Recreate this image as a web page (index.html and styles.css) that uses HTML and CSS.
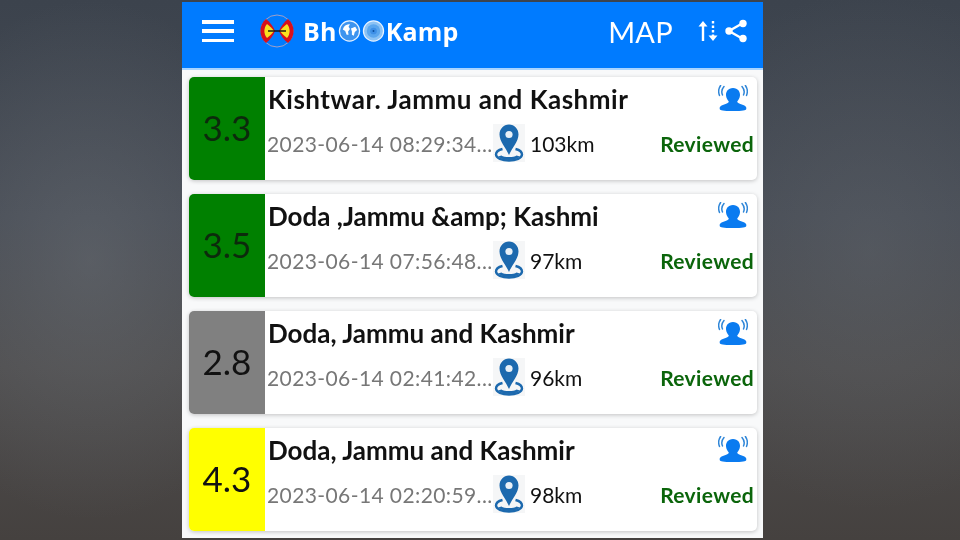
FILE: index.html
```html
<!DOCTYPE html>
<html lang="en">
<head>
<meta charset="utf-8">
<title>BhooKamp</title>
<link rel="stylesheet" href="styles.css">
</head>
<body>
<svg class="defs" width="0" height="0" aria-hidden="true">
  <symbol id="pin" viewBox="0 0 32 38">
    <path d="M16 0.500C10.500 0.500 6.500 5 6.500 10.500 6.500 17.500 13 24 16 31 19 24 25.500 17.500 25.500 10.500 25.500 5 21.500 0.500 16 0.500Z" fill="#1c69ae"/>
    <circle cx="16" cy="10.500" r="3.600" fill="#e8f0f7"/>
    <path d="M9.500 25C5.500 26 3 28 3 30.500 3 34 9 36.500 16 36.500S29 34 29 30.500C29 28 26.500 26 22.500 25" fill="none" stroke="#1c69ae" stroke-width="2.400"/>
    <path d="M5 32.500C8 35 12 36 16 36S24 35 27 32.500L23.500 31.500C21 33.500 11 33.500 8.500 31.500Z" fill="#1c69ae"/>
  </symbol>
  <symbol id="felt" viewBox="0 0 30 26">
    <path d="M15 3C10 3 7.800 6.800 8 10.300 8.200 13 9.500 15 10.800 16.500 10.800 18 8.500 18.700 5.500 19.800 2.500 20.800 1.300 22 1.700 24 2.200 25.500 5 26 15 26S27.800 25.500 28.300 24C28.700 22 27.500 20.800 24.500 19.800 21.500 18.700 19.200 18 19.200 16.500 20.500 15 21.800 13 22 10.300 22.200 6.800 20 3 15 3Z" fill="#0a7bf0"/>
    <path d="M6 1.500C3.800 4 3.400 7.500 4.500 10M2.600 0.500C0.500 3.500 0.300 7.500 1.500 10.500M24 1.500C26.200 4 26.600 7.500 25.500 10M27.400 0.500C29.500 3.500 29.700 7.500 28.500 10.500" fill="none" stroke="#2f86d8" stroke-width="1.500" stroke-linecap="round"/>
  </symbol>
</svg>
<main class="phone">
  <header class="appbar">
    <button class="menu" aria-label="Menu"><span></span><span></span><span></span></button>
    <svg class="logo" viewBox="0 0 36 34" aria-hidden="true">
      <circle cx="18" cy="17" r="16" fill="none" stroke="#c9a8b8" stroke-width="0.800"/>
      <path d="M7 5C-0.500 11-0.500 23 7 29 11 26 14.500 21 16 17 14.500 13 11 8 7 5Z" fill="#d8101c"/>
      <path d="M29 5C36.500 11 36.500 23 29 29 25 26 21.500 21 20 17 21.500 13 25 8 29 5Z" fill="#d8101c"/>
      <path d="M8 10C4.500 14 4.500 20 8 24 11 22 13.500 19 15 17 13.500 15 11 12 8 10Z" fill="#f8e020"/>
      <path d="M28 10C31.500 14 31.500 20 28 24 25 22 22.500 19 21 17 22.500 15 25 12 28 10Z" fill="#f8e020"/>
      <path d="M9 17H27" stroke="#111" stroke-width="1.400"/>
    </svg>
    <div class="brand">
      <span>Bh</span>
      <svg class="mark" viewBox="0 0 24 24" aria-hidden="true">
        <circle cx="12" cy="12" r="10.500" fill="#3d94ef" stroke="#e8f3ff" stroke-width="1.300"/>
        <path d="M6 8C8 5 11 4.500 12.500 5L11 7.500 12.500 10 10.500 12.500 11 16 9 16 7.500 12 5 10.500ZM13.500 9.500 18 7.500 20 11 17.500 13 16.500 17 14.500 16 14.500 12.500Z" fill="#fff"/>
      </svg>
      <svg class="mark" viewBox="0 0 24 24" aria-hidden="true">
        <circle cx="12" cy="12" r="10.500" fill="#8cc3f5" stroke="#e8f3ff" stroke-width="1.300"/>
        <circle cx="12" cy="12" r="7" fill="#5aa6ee"/>
        <circle cx="12" cy="12" r="3.500" fill="#3d8fe6"/>
        <circle cx="12" cy="12" r="1" fill="#0b4f9c"/>
      </svg>
      <span>Kamp</span>
    </div>
    <div class="map">MAP</div>
    <svg class="sort" viewBox="0 0 22 24" aria-hidden="true">
      <path d="M6 2 1.500 7.500H4.800V22H7.200V7.500H10.500Z" fill="#fff"/>
      <path d="M16 22 11.500 16.500H20.500Z" fill="#fff"/>
      <path d="M16 2V17" stroke="#fff" stroke-width="2.400" stroke-dasharray="2.500 2"/>
    </svg>
    <svg class="share" viewBox="0 0 24 24" aria-hidden="true">
      <path d="M19 4 5 12 19 20" fill="none" stroke="#fff" stroke-width="2.400"/>
      <circle cx="19" cy="4.500" r="3.700" fill="#fff"/>
      <circle cx="5" cy="12" r="3.700" fill="#fff"/>
      <circle cx="19" cy="19.500" r="3.700" fill="#fff"/>
    </svg>
  </header>
  <section class="list">
    <article class="card">
      <div class="mag mag-green">3.3</div>
      <div class="body">
        <div class="row-top"><h2 class="place place-wide">Kishtwar. Jammu and Kashmir</h2><svg class="felt"><use href="#felt"/></svg></div>
        <div class="row-bottom"><span class="date">2023-06-14 08:29:34...</span><svg class="pin"><use href="#pin"/></svg><span class="dist">103km</span><span class="status">Reviewed</span></div>
      </div>
    </article>
    <article class="card">
      <div class="mag mag-green">3.5</div>
      <div class="body">
        <div class="row-top"><h2 class="place">Doda ,Jammu &amp;amp; Kashmi</h2><svg class="felt"><use href="#felt"/></svg></div>
        <div class="row-bottom"><span class="date">2023-06-14 07:56:48...</span><svg class="pin"><use href="#pin"/></svg><span class="dist">97km</span><span class="status">Reviewed</span></div>
      </div>
    </article>
    <article class="card">
      <div class="mag mag-grey">2.8</div>
      <div class="body">
        <div class="row-top"><h2 class="place">Doda, Jammu and Kashmir</h2><svg class="felt"><use href="#felt"/></svg></div>
        <div class="row-bottom"><span class="date">2023-06-14 02:41:42...</span><svg class="pin"><use href="#pin"/></svg><span class="dist">96km</span><span class="status">Reviewed</span></div>
      </div>
    </article>
    <article class="card">
      <div class="mag mag-yellow">4.3</div>
      <div class="body">
        <div class="row-top"><h2 class="place">Doda, Jammu and Kashmir</h2><svg class="felt"><use href="#felt"/></svg></div>
        <div class="row-bottom"><span class="date">2023-06-14 02:20:59...</span><svg class="pin"><use href="#pin"/></svg><span class="dist">98km</span><span class="status">Reviewed</span></div>
      </div>
    </article>
  </section>
</main>
</body>
</html>
```
FILE: styles.css
```css
* { box-sizing: border-box; }
html, body { margin: 0; height: 100%; }
body {
  width: 960px;
  height: 540px;
  overflow: hidden;
  padding: 2px 197px 2px 182px;
  font-family: "Lato", "Noto Sans", sans-serif;
  background:
    radial-gradient(ellipse 200px 260px at 90px 260px, rgba(115,120,126,.4), rgba(115,120,126,0)),
    radial-gradient(ellipse 220px 260px at 870px 250px, rgba(105,110,116,.35), rgba(105,110,116,0)),
    linear-gradient(180deg, #3c434d 0%, #464b54 40%, #4e4d4e 68%, #45413f 100%);
}
.defs { position: absolute; }
.phone { width: 581px; height: 536px; background: #f8f9fa; overflow: hidden; filter: blur(.3px); }
.appbar {
  height: 68px;
  background: #007bff;
  border-bottom: 2px solid #a9d4ff;
  display: flex;
  align-items: center;
  padding: 0 15px 8px 20px;
  color: #fff;
}
.menu {
  width: 32px; height: 22px; padding: 0; border: 0; background: none;
  display: flex; flex-direction: column; justify-content: space-between;
}
.menu span { display: block; height: 3.500px; background: #fff; }
.logo { width: 36px; height: 34px; margin-left: 25px; }
.brand {
  display: flex; align-items: center; margin-left: 8px;
  font: 700 25px "Open Sans", sans-serif;
  letter-spacing: .2px;
}
.mark { width: 23px; height: 24px; margin: 0 0 0 1px; }
.mark + span { margin-left: 1px; }
.map { margin-left: auto; font-size: 29px; letter-spacing: .3px; }
.sort { width: 22px; height: 24px; margin-left: 24px; }
.share { width: 24px; height: 24px; margin-left: 5px; }
.list { display: flex; flex-direction: column; gap: 14px; padding: 7px 6px 0 7px; }
.card {
  height: 103px; display: flex; background: #fff; border-radius: 5px;
  box-shadow: 0 1px 4px rgba(0,0,0,.22); overflow: hidden;
}
.mag {
  width: 76px; flex: none; display: flex; align-items: center; justify-content: center;
  font-size: 35px; color: #111; padding-bottom: 4px;
}
.mag-green { background: #008000; color: #0c2a0c; }
.mag-grey { background: #808080; }
.mag-yellow { background: #ffff00; }
.body { flex: 1; min-width: 0; padding: 5px 3px 0 2px; display: flex; flex-direction: column; }
.row-top { display: flex; justify-content: space-between; align-items: flex-start; height: 42px; padding-right: 6px; }
.place { margin: 1px 0 0 1px; font-size: 26px; line-height: 33px; font-weight: 700; color: #111; white-space: nowrap; }
.place-wide { letter-spacing: .5px; }
.felt { width: 30px; height: 26px; margin-top: 3px; }
.row-bottom { display: flex; align-items: center; }
.date { width: 226px; font-size: 21px; color: #777; letter-spacing: .4px; white-space: nowrap; }
.pin { width: 32px; height: 38px; background: #f5f6f7; }
.dist { margin-left: 5px; font-size: 21px; color: #111; }
.status { margin-left: auto; font-size: 21px; font-weight: 700; color: #0b650b; letter-spacing: .35px; }
```
